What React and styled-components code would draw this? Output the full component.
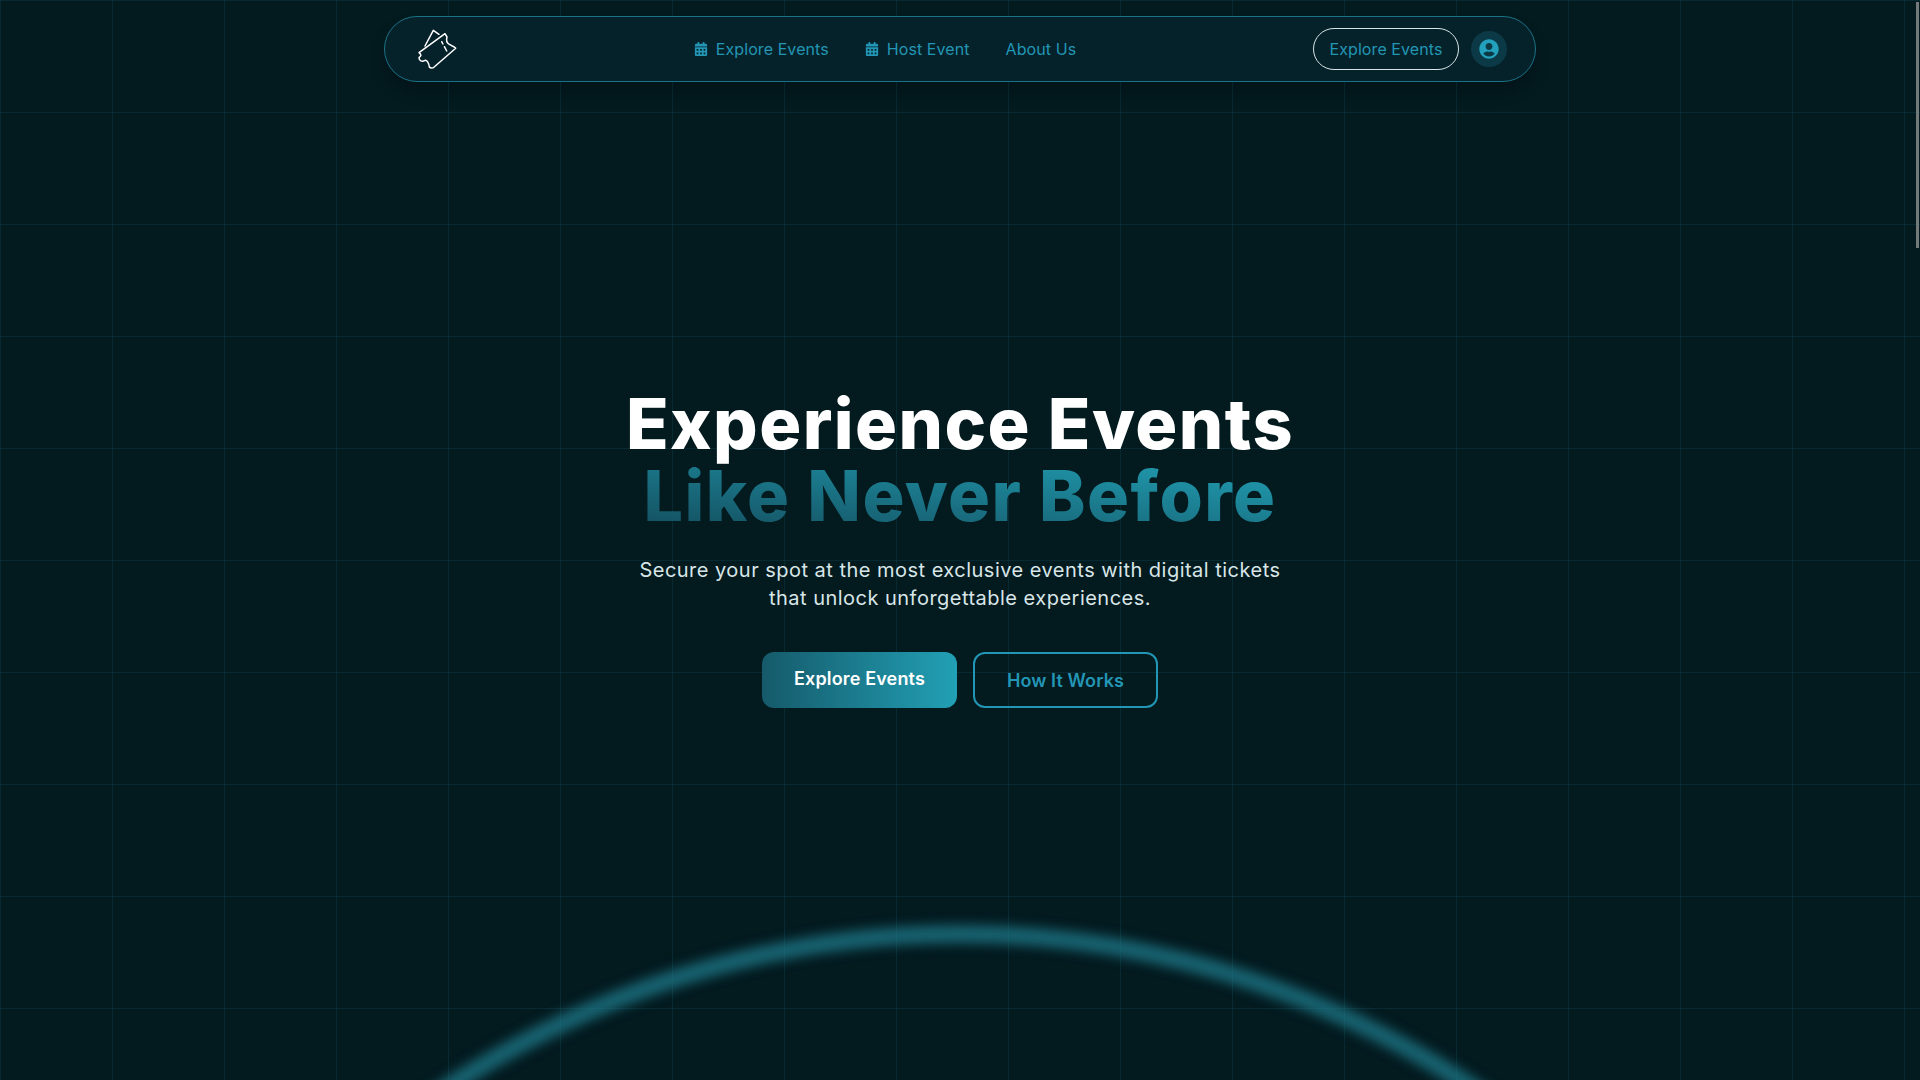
import React from 'react'
import styled, { createGlobalStyle } from 'styled-components'
import { FaCalendarAlt, FaUserCircle } from 'react-icons/fa'

const accent = '#2296b4'
const font = 'Inter, "Open Sans", "Liberation Sans", sans-serif'

const Global = createGlobalStyle`
  html, body { margin: 0; padding: 0; background: #031a1f; }
  * { box-sizing: border-box; }
`

const Page = styled.div`
  position: relative;
  height: 1080px;
  overflow: hidden;
  font-family: ${font};
  background-color: #031a1f;

  /* grid sits on top of the arc, under the content */
  &::after {
    content: '';
    position: absolute;
    inset: 0;
    pointer-events: none;
    background-image:
      linear-gradient(to right, rgba(30, 120, 140, 0.18) 1px, transparent 1px),
      linear-gradient(to bottom, rgba(30, 120, 140, 0.18) 1px, transparent 1px);
    background-size: 112px 112px;
  }
`

const Nav = styled.nav`
  position: relative;
  z-index: 1;
  display: flex;
  align-items: center;
  justify-content: space-between;
  width: 1152px;
  height: 66px;
  margin: 16px auto 0;
  padding: 0 28px 0 32px;
  border: 1px solid #1a7286;
  border-radius: 33px;
  background: #05222b;
  box-shadow: 0 10px 15px rgba(0, 0, 0, 0.18);
`

const Links = styled.ul`
  display: flex;
  align-items: center;
  gap: 36px;
  margin: 0;
  padding: 0;
  list-style: none;
`

const LinkItem = styled.li`
  display: flex;
  align-items: center;
  gap: 8px;
  font-size: 16px;
  letter-spacing: 0.08px;
  color: ${accent};
  svg { width: 14px; height: 14px; }
`

const Actions = styled.div`
  display: flex;
  align-items: center;
  gap: 12px;
`

const PillButton = styled.button`
  height: 42px;
  width: 146px;
  padding: 0;
  border: 1px solid #d8e4e6;
  border-radius: 21px;
  background: transparent;
  color: ${accent};
  font: 400 16px ${font};
  letter-spacing: 0.08px;
`

const Avatar = styled.div`
  display: flex;
  align-items: center;
  justify-content: center;
  width: 36px;
  height: 36px;
  border-radius: 50%;
  background: #0c3946;
  color: #22a0bc;
  svg { width: 20px; height: 20px; }
`

const Hero = styled.section`
  position: relative;
  z-index: 1;
  display: flex;
  flex-direction: column;
  align-items: center;
  padding-top: 306px;
  text-align: center;
`

const Title = styled.h1`
  margin: 0;
  font-size: 70px;
  font-weight: 800;
  line-height: 72px;
  letter-spacing: 1.45px;
  color: #fff;
`

const GradientLine = styled.span`
  display: inline-block;
  background: linear-gradient(to top right, #134e5e, #22a0b5);
  -webkit-background-clip: text;
  background-clip: text;
  color: transparent;
`

const Subtitle = styled.p`
  margin: 24px 0 0;
  font-size: 20px;
  line-height: 28px;
  letter-spacing: 0.48px;
  color: #d8e6e8;
`

const Buttons = styled.div`
  display: flex;
  gap: 16px;
  margin-top: 40px;
`

const Primary = styled.button`
  height: 56px;
  width: 195px;
  padding: 0 0 4px;
  border: 0;
  border-radius: 12px;
  background: linear-gradient(to right, #155a6a, #22a0b5);
  color: #fff;
  font: 600 18px ${font};
  letter-spacing: 0.15px;
`

const Secondary = styled.button`
  height: 56px;
  width: 185px;
  padding: 0;
  border: 2px solid ${accent};
  border-radius: 12px;
  background: transparent;
  color: ${accent};
  font: 600 18px ${font};
  letter-spacing: 0.1px;
`

// big blurred ring rising from the bottom edge
const Arc = styled.div`
  position: absolute;
  left: 50%;
  top: 925px;
  width: 1880px;
  height: 1880px;
  margin-left: -940px;
  border: 18px solid #186371;
  border-radius: 50%;
  filter: blur(6px);
`

const Thumb = styled.div`
  position: absolute;
  z-index: 2;
  top: 2px;
  right: 1px;
  width: 3px;
  height: 246px;
  background: #747a7c;
`

const Logo = () => (
  <svg width="40" height="40" viewBox="0 0 40 40" fill="none" stroke="#fff" strokeWidth="1.5" strokeLinejoin="round" strokeLinecap="round">
    <path d="M2 23.7 L28 4.7 L30 8 C29 11 30 14 32.3 15.3 C34 17 36.5 16.5 38.7 19.3 L16.3 38.7 L14 39 L12.3 38 C12 34 10 31 8 31.3 C5 33 2 32 2 28.5 C4 27 5 26 2 23.7 Z" />
    <path d="M8 17 L16.3 1.3 L22 5.3" />
    <path d="M24.7 12.7 L25.9 15 M27.4 17.7 L29.7 22" />
  </svg>
)

export default function App() {
  return (
    <Page>
      <Global />
      <Arc />
      <Nav>
        <Logo />
        <Links>
          <LinkItem><FaCalendarAlt />Explore Events</LinkItem>
          <LinkItem><FaCalendarAlt />Host Event</LinkItem>
          <LinkItem>About Us</LinkItem>
        </Links>
        <Actions>
          <PillButton>Explore Events</PillButton>
          <Avatar><FaUserCircle /></Avatar>
        </Actions>
      </Nav>
      <Hero>
        <Title>
          Experience Events<br />
          <GradientLine>Like Never Before</GradientLine>
        </Title>
        <Subtitle>
          Secure your spot at the most exclusive events with digital tickets<br />
          that unlock unforgettable experiences.
        </Subtitle>
        <Buttons>
          <Primary>Explore Events</Primary>
          <Secondary>How It Works</Secondary>
        </Buttons>
      </Hero>
      <Thumb />
    </Page>
  )
}
